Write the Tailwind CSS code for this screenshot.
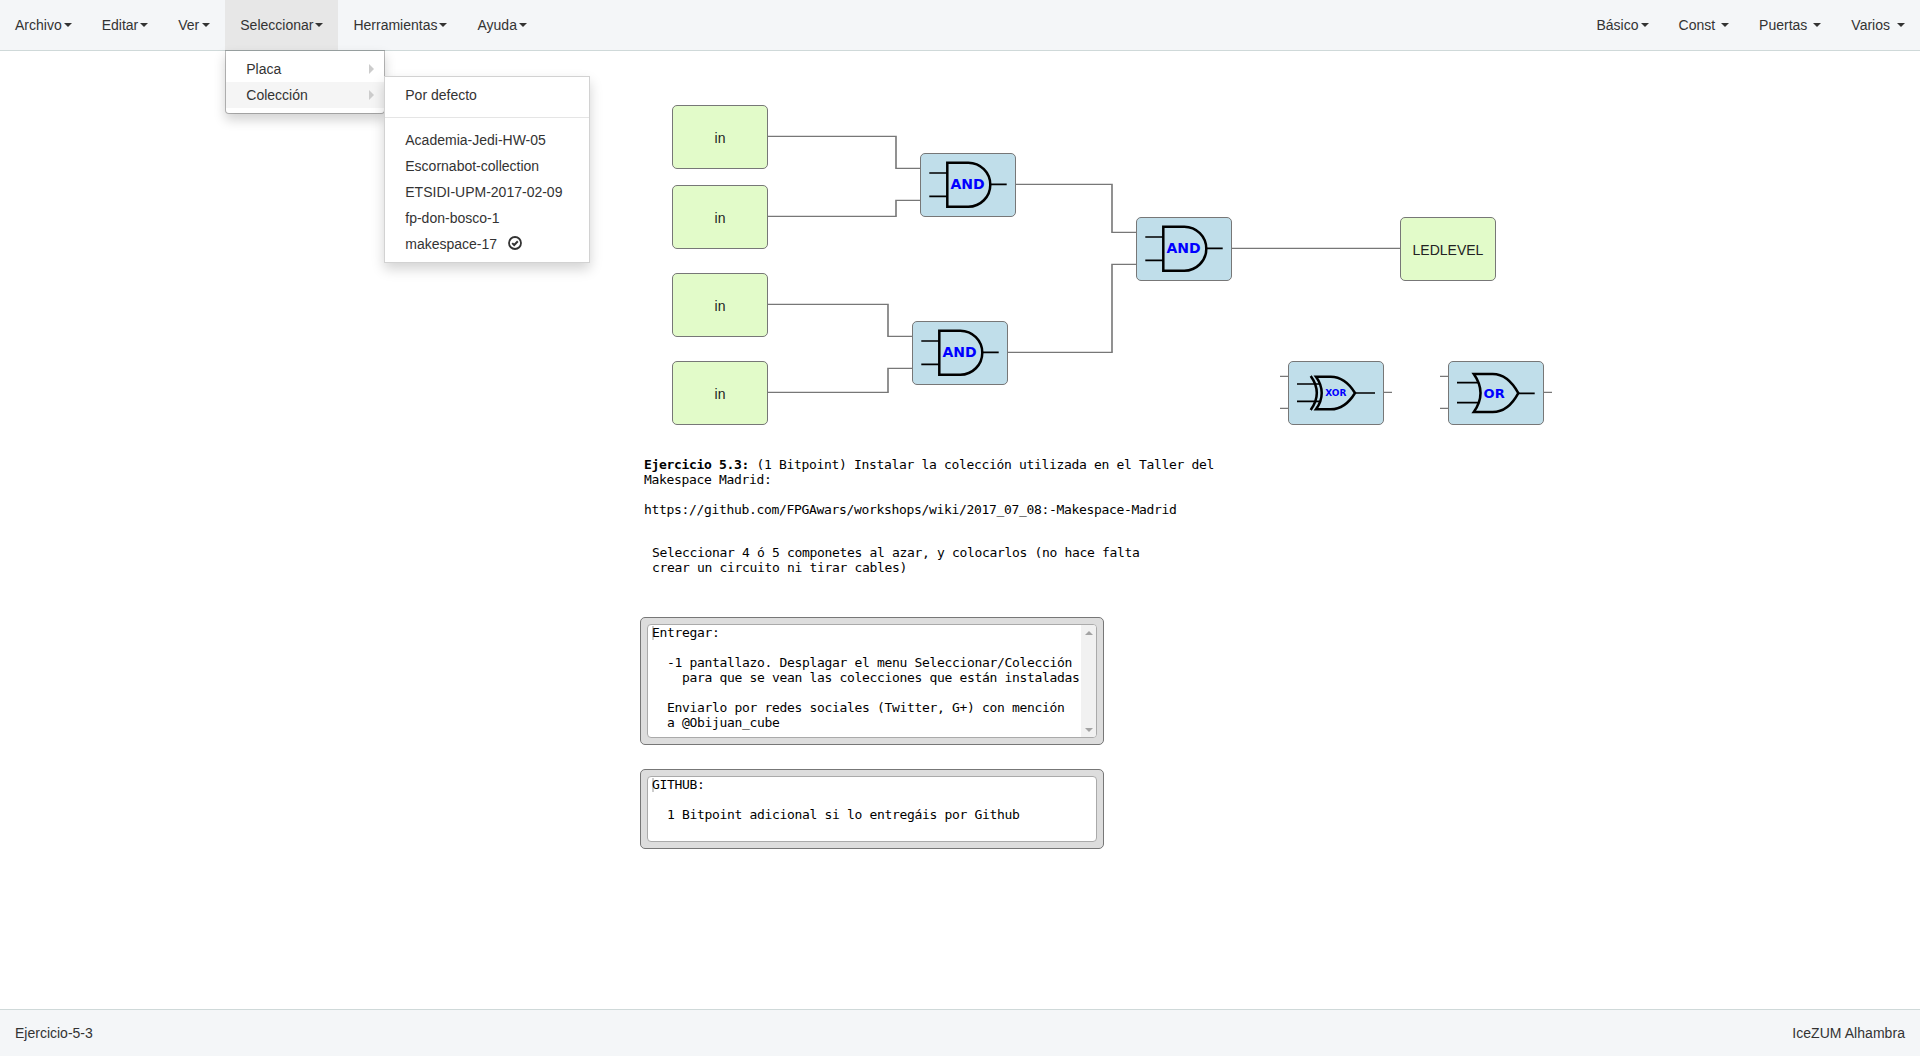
<!DOCTYPE html>
<html lang="es">
<head>
<meta charset="utf-8">
<title>Ejercicio-5-3</title>
<script src="https://cdn.jsdelivr.net/npm/@tailwindcss/browser@4"></script>
</head>
<body class="flex h-screen flex-col overflow-hidden bg-white font-['Liberation_Sans',Arial,sans-serif] text-sm leading-5 text-[#333]">

<svg class="hidden">
  <symbol id="and" viewBox="0 0 96 64">
    <path d="M9.3 20H27M9.3 43.3H27M70.3 31.3H86.7" fill="none" stroke="#000" stroke-width="1.7"/>
    <path d="M27.3 9.7H48.3A22 22 0 0 1 48.3 53.7H27.3Z" fill="none" stroke="#000" stroke-width="2.5"/>
    <text x="30.5" y="36.3" fill="#00f" font-family="DejaVu Sans" font-weight="bold" font-size="14">AND</text>
  </symbol>
  <symbol id="or" viewBox="0 0 96 64">
    <path d="M9 21.7H31M9 41.7H31M70.3 32.3H86.7" fill="none" stroke="#000" stroke-width="1.7"/>
    <path d="M25.8 13H44.7C56.5 13 65 22.5 70.3 32.1C65 42 56.5 51 44.7 51H25.8C35 38 35 26 25.8 13Z" fill="none" stroke="#000" stroke-width="2.5"/>
    <text x="35.6" y="37" fill="#00f" font-family="DejaVu Sans" font-weight="bold" font-size="13">OR</text>
  </symbol>
  <symbol id="xor" viewBox="0 0 96 64">
    <path d="M9 23H32M9 40.3H32M67 32H87" fill="none" stroke="#000" stroke-width="1.7"/>
    <path d="M28 15.7H42.7C53 15.7 61.5 23 67 32C61.5 41 53 48.3 42.7 48.3H28C35.6 38 35.6 26 28 15.7ZM22.7 15C30.6 26 30.6 38 22.7 49" fill="none" stroke="#000" stroke-width="2.5"/>
    <text x="37.2" y="35" fill="#00f" font-family="DejaVu Sans" font-weight="bold" font-size="9">XOR</text>
  </symbol>
</svg>

<header class="relative z-10 flex h-[51px] shrink-0 justify-between border-b border-[#cfd9d9] bg-[#f4f6f8]">
  <nav class="flex">
    <div class="flex items-center px-[15px]">Archivo<i class="ml-0.5 border-x-4 border-t-4 border-x-transparent border-t-[#333]"></i></div>
    <div class="flex items-center px-[15px]">Editar<i class="ml-0.5 border-x-4 border-t-4 border-x-transparent border-t-[#333]"></i></div>
    <div class="flex items-center px-[15px]">Ver<i class="ml-[3px] border-x-4 border-t-4 border-x-transparent border-t-[#333]"></i></div>
    <div class="relative flex items-center bg-[#e7e7e7] px-[15px]">Seleccionar<i class="ml-0.5 border-x-4 border-t-4 border-x-transparent border-t-[#333]"></i>
      <div class="absolute left-0 top-full w-40 rounded-b border border-black/25 bg-white bg-clip-padding py-[5px] shadow-[0_6px_12px_rgba(0,0,0,0.175)]">
        <div class="flex h-[26px] items-center justify-between pl-5 pr-2.5">Placa<i class="border-y-5 border-l-5 border-y-transparent border-l-[#ccc]"></i></div>
        <div class="relative flex h-[26px] items-center justify-between bg-[#f5f5f5] pl-5 pr-2.5">Colección<i class="border-y-5 border-l-5 border-y-transparent border-l-[#ccc]"></i>
          <div class="absolute -top-1.5 left-full w-[206px] border border-[#d2d2d2] bg-white py-[5px] shadow-[0_6px_12px_rgba(0,0,0,0.175)]">
            <div class="flex h-[26px] items-center px-5">Por defecto</div>
            <div class="my-[9px] h-px bg-[#e5e5e5]"></div>
            <div class="flex h-[26px] items-center px-5">Academia-Jedi-HW-05</div>
            <div class="flex h-[26px] items-center px-5">Escornabot-collection</div>
            <div class="flex h-[26px] items-center px-5">ETSIDI-UPM-2017-02-09</div>
            <div class="flex h-[26px] items-center px-5">fp-don-bosco-1</div>
            <div class="flex h-[26px] items-center gap-[11px] px-5">makespace-17
              <svg class="-mt-0.5 size-3.5" viewBox="0 0 14 14" fill="none" stroke="#333"><circle cx="7" cy="7" r="6" stroke-width="1.8"/><path d="M4.2 7.1L6.2 9L9.8 5.3" stroke-width="2"/></svg>
            </div>
          </div>
        </div>
      </div>
    </div>
    <div class="flex items-center px-[15px]">Herramientas<i class="ml-0.5 border-x-4 border-t-4 border-x-transparent border-t-[#333]"></i></div>
    <div class="flex items-center px-[15px]">Ayuda<i class="ml-0.5 border-x-4 border-t-4 border-x-transparent border-t-[#333]"></i></div>
  </nav>
  <nav class="flex">
    <div class="flex items-center px-[15px]">Básico<i class="ml-0.5 border-x-4 border-t-4 border-x-transparent border-t-[#333]"></i></div>
    <div class="flex items-center px-[15px]">Const<i class="ml-1.5 border-x-4 border-t-4 border-x-transparent border-t-[#333]"></i></div>
    <div class="flex items-center px-[15px]">Puertas<i class="ml-1.5 border-x-4 border-t-4 border-x-transparent border-t-[#333]"></i></div>
    <div class="flex items-center px-[15px]">Varios<i class="ml-[7px] border-x-4 border-t-4 border-x-transparent border-t-[#333]"></i></div>
  </nav>
</header>

<!-- Design canvas: children are placed at canvas coordinates, shifted by the header height -->
<main class="relative min-h-0 flex-1">
  <div class="absolute -top-[51px] left-0 h-[1009px] w-full">
    <svg class="absolute inset-0 size-full" fill="none" stroke="#777">
      <path stroke-width="1.25" d="M768 136.4H896.8M895.2 168.4H920M768 216.4H896.8M895.2 200.4H920M768 304.4H888.8M887.2 336.4H912M768 392.4H888.8M887.2 368.4H912M1016 184.4H1112.8M1111.2 232.4H1136M1008 352.4H1112.8M1111.2 264.4H1136M1232 248.4H1400M1280 376.4H1288M1280 408.4H1288M1384 392.4H1392M1440 376.4H1448M1440 408.4H1448M1544 392.4H1552"/>
      <path stroke-width="1.6" d="M896 137V168M896 201V216M888 305V336M888 369V392M1112 185V232M1112 265V352"/>
    </svg>

    <div class="absolute left-[672px] top-[105px] flex h-16 w-24 items-center justify-center rounded-[5px] border border-[#777] bg-[#e2fbc9] pt-0.5 text-[#222]">in</div>
    <div class="absolute left-[672px] top-[185px] flex h-16 w-24 items-center justify-center rounded-[5px] border border-[#777] bg-[#e2fbc9] pt-0.5 text-[#222]">in</div>
    <div class="absolute left-[672px] top-[273px] flex h-16 w-24 items-center justify-center rounded-[5px] border border-[#777] bg-[#e2fbc9] pt-0.5 text-[#222]">in</div>
    <div class="absolute left-[672px] top-[361px] flex h-16 w-24 items-center justify-center rounded-[5px] border border-[#777] bg-[#e2fbc9] pt-0.5 text-[#222]">in</div>
    <div class="absolute left-[1400px] top-[217px] flex h-16 w-24 items-center justify-center rounded-[5px] border border-[#777] bg-[#e2fbc9] pt-0.5 text-[#222]">LEDLEVEL</div>

    <div class="absolute left-[920px] top-[153px] h-16 w-24 rounded-[5px] border border-[#777] bg-[#c0deea]"><svg class="-m-px h-16 w-24"><use href="#and"/></svg></div>
    <div class="absolute left-[912px] top-[321px] h-16 w-24 rounded-[5px] border border-[#777] bg-[#c0deea]"><svg class="-m-px h-16 w-24"><use href="#and"/></svg></div>
    <div class="absolute left-[1136px] top-[217px] h-16 w-24 rounded-[5px] border border-[#777] bg-[#c0deea]"><svg class="-m-px h-16 w-24"><use href="#and"/></svg></div>
    <div class="absolute left-[1288px] top-[361px] h-16 w-24 rounded-[5px] border border-[#777] bg-[#c0deea]"><svg class="-m-px h-16 w-24"><use href="#xor"/></svg></div>
    <div class="absolute left-[1448px] top-[361px] h-16 w-24 rounded-[5px] border border-[#777] bg-[#c0deea]"><svg class="-m-px h-16 w-24"><use href="#or"/></svg></div>

    <pre class="absolute left-[644px] top-[457px] font-['DejaVu_Sans_Mono',monospace] text-[13px] leading-[15px] tracking-[-0.327px] text-black"><b>Ejercicio 5.3:</b> (1 Bitpoint) Instalar la colección utilizada en el Taller del
Makespace Madrid:

https://github.com/FPGAwars/workshops/wiki/2017_07_08:-Makespace-Madrid</pre>
    <pre class="absolute left-[652px] top-[545px] font-['DejaVu_Sans_Mono',monospace] text-[13px] leading-[15px] tracking-[-0.327px] text-black">Seleccionar 4 ó 5 componetes al azar, y colocarlos (no hace falta
crear un circuito ni tirar cables)</pre>

    <div class="absolute left-[640px] top-[617px] flex h-32 w-[464px] rounded-[5px] border border-[#777] bg-[#ddd] p-1.5">
      <div class="flex flex-1 justify-between overflow-hidden rounded border border-[#aaa] bg-white pl-1">
        <div class="relative">
          <i class="absolute left-0 top-px h-3.5 w-0.5 bg-[#ccc]"></i>
          <pre class="relative font-['DejaVu_Sans_Mono',monospace] text-[13px] leading-[15px] tracking-[-0.327px] text-black">Entregar:

  -1 pantallazo. Desplagar el menu Seleccionar/Colección
    para que se vean las colecciones que están instaladas

  Enviarlo por redes sociales (Twitter, G+) con mención
  a @Obijuan_cube</pre>
        </div>
        <div class="flex w-[15px] flex-col items-center justify-between bg-[#f1f1f1] pb-[5px] pt-1.5">
          <i class="border-x-4 border-b-4 border-x-transparent border-b-[#a3a3a3]"></i>
          <i class="border-x-4 border-t-4 border-x-transparent border-t-[#a3a3a3]"></i>
        </div>
      </div>
    </div>

    <div class="absolute left-[640px] top-[769px] flex h-20 w-[464px] rounded-[5px] border border-[#777] bg-[#ddd] p-1.5">
      <div class="relative flex-1 overflow-hidden rounded border border-[#aaa] bg-white pl-1">
        <i class="absolute left-1 top-px h-3.5 w-0.5 bg-[#ccc]"></i>
        <pre class="relative font-['DejaVu_Sans_Mono',monospace] text-[13px] leading-[15px] tracking-[-0.327px] text-black">GITHUB:

  1 Bitpoint adicional si lo entregáis por Github</pre>
      </div>
    </div>
  </div>
</main>

<footer class="flex h-[47px] shrink-0 items-center justify-between border-t border-[#cfd9d9] bg-[#f4f6f8] px-[15px]">
  <span>Ejercicio-5-3</span>
  <span class="tracking-[0.05px]">IceZUM Alhambra</span>
</footer>
</body>
</html>
